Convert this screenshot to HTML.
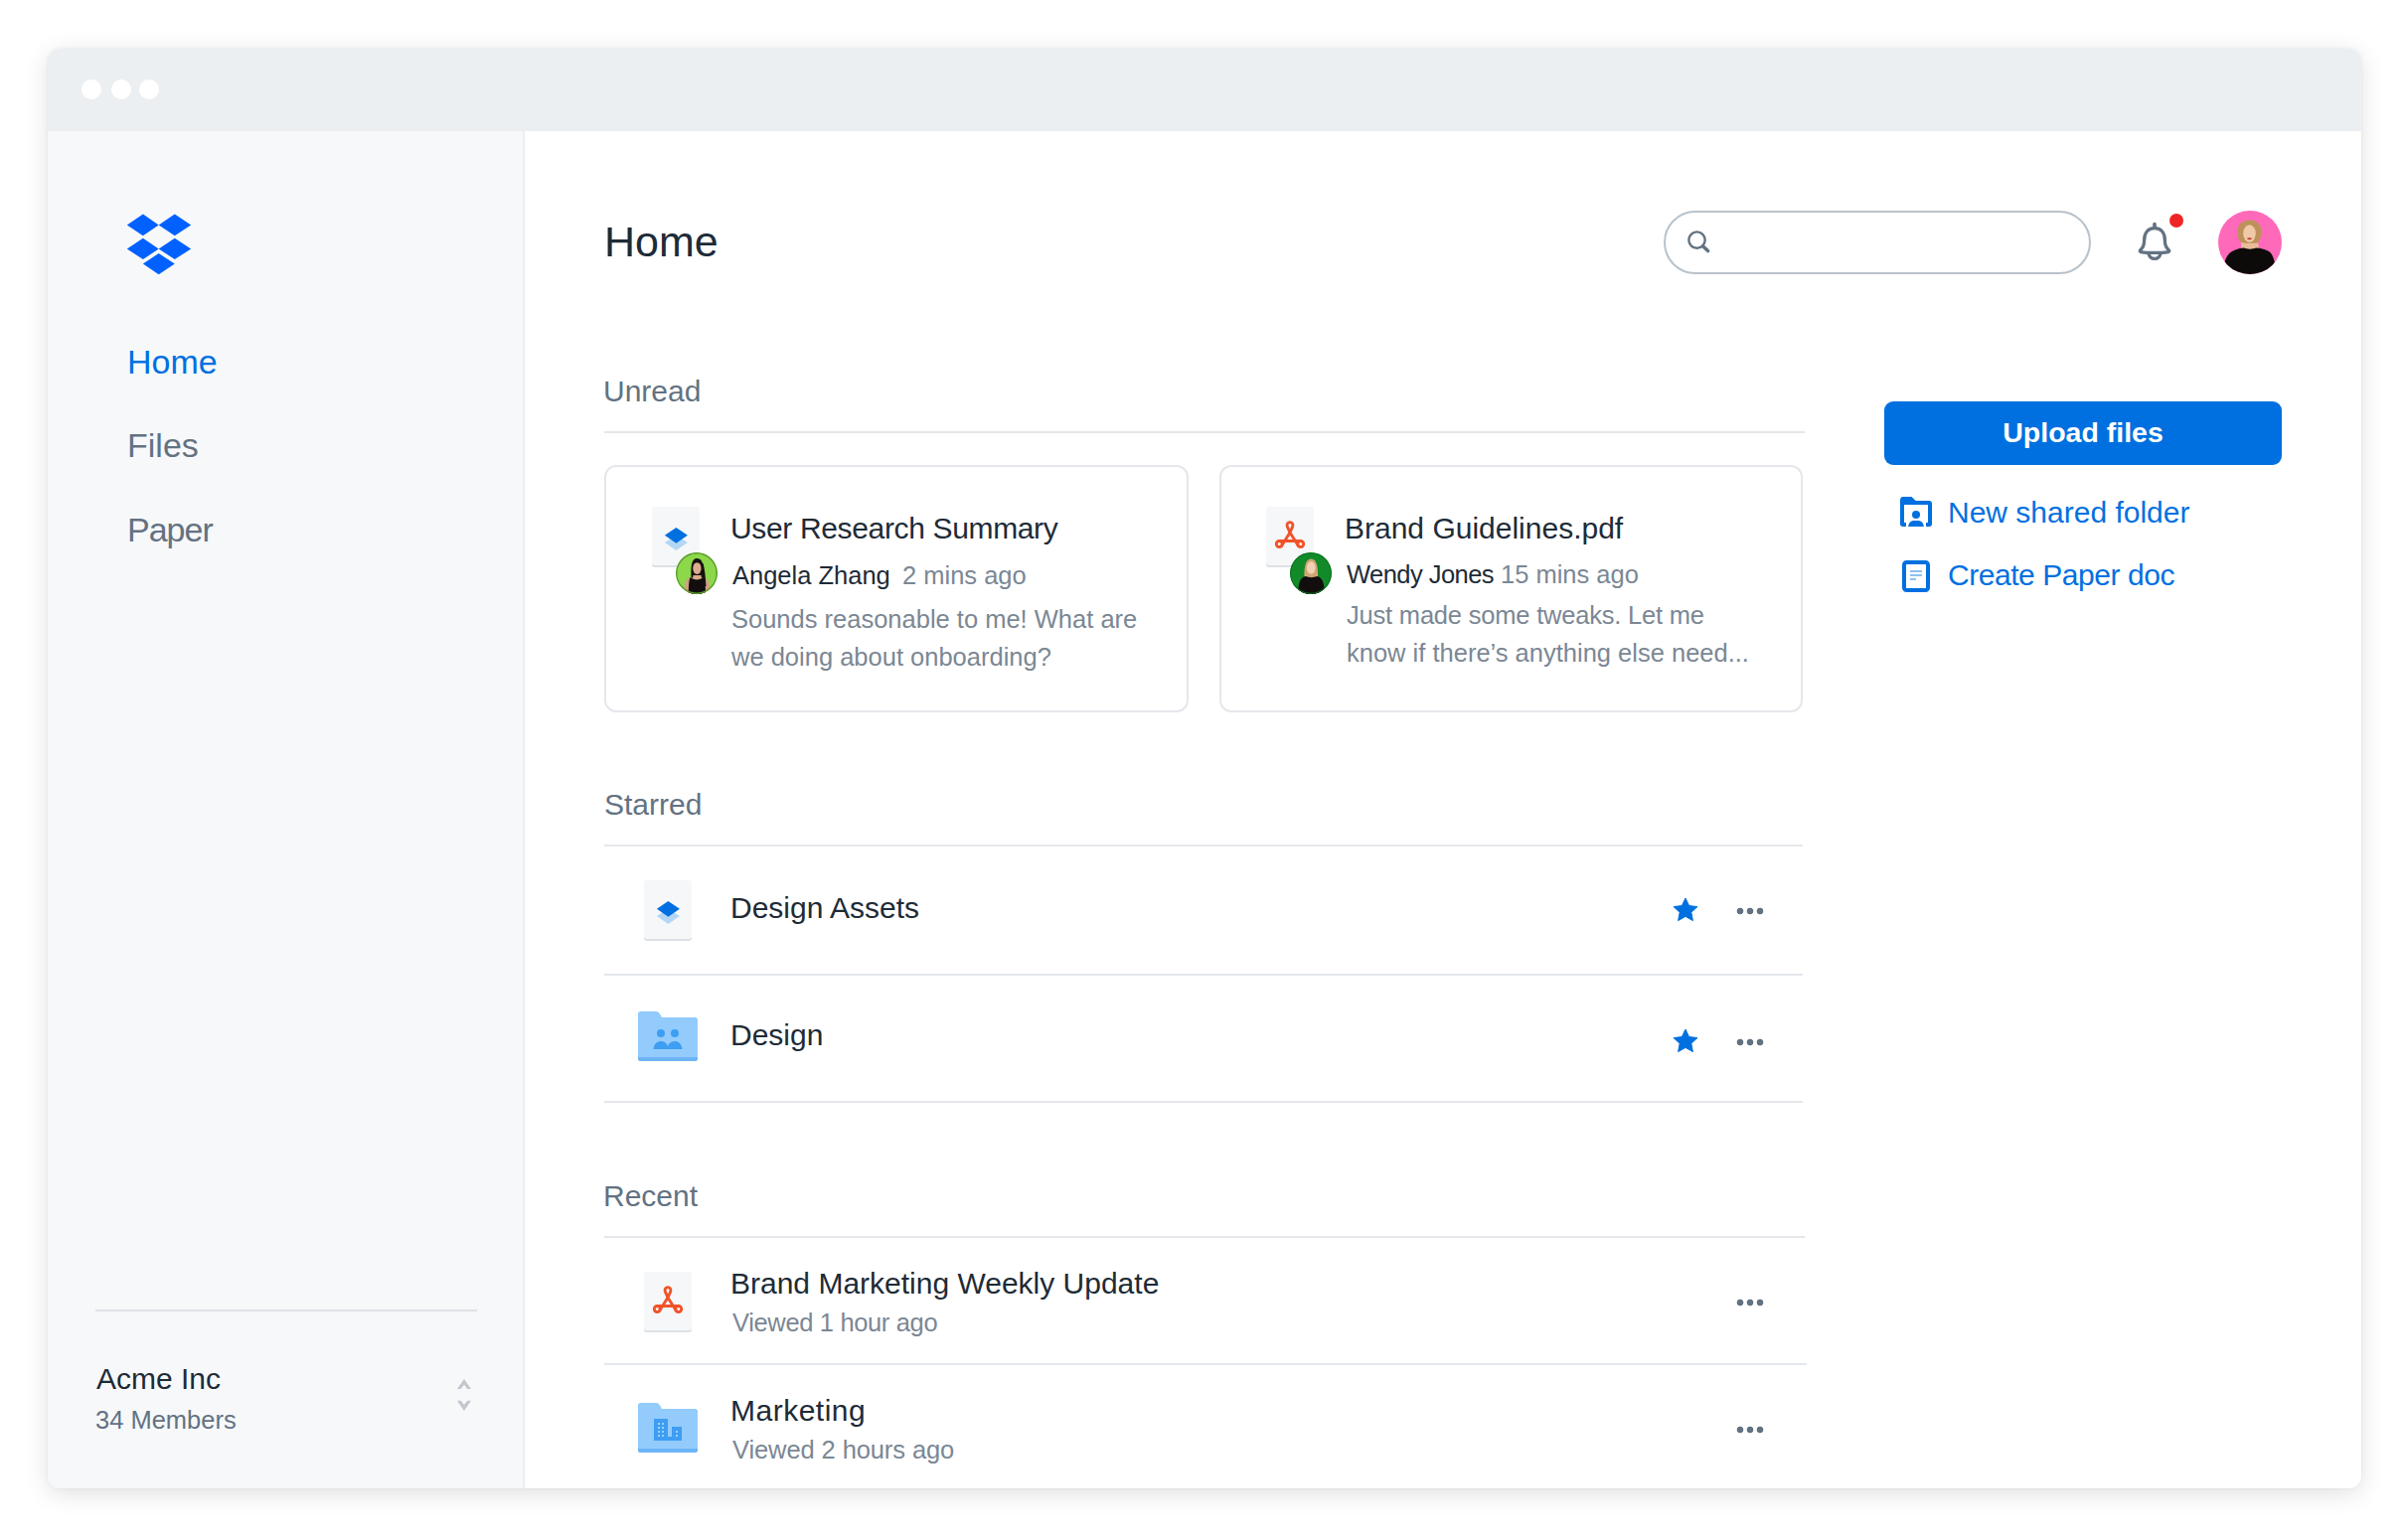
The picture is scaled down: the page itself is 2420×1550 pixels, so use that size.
<!DOCTYPE html>
<html>
<head>
<meta charset="utf-8">
<style>
html,body{margin:0;padding:0;background:#ffffff;width:2420px;height:1550px;overflow:hidden;}
body{font-family:"Liberation Sans",sans-serif;position:relative;}
.win{position:absolute;left:48px;top:49px;width:2328px;height:1449px;border-radius:12px;background:#fff;
  box-shadow:0 5px 24px rgba(0,0,0,0.13),0 0 3px rgba(0,0,0,0.06);overflow:hidden;}
.titlebar{position:absolute;left:0;top:0;width:2328px;height:83px;background:#ECEFF2;}
.dot{position:absolute;top:31px;width:20px;height:20px;border-radius:50%;background:#fff;}
.side{position:absolute;left:0;top:83px;width:478px;height:1366px;background:#F7F8FA;border-right:2px solid #EAEDF0;}
.t{position:absolute;white-space:nowrap;line-height:1;}
.dark{color:#1E2B37;}
.gray{color:#637282;}
.meta{color:#7B8794;}
.blue{color:#0070E0;}
.fbox{position:absolute;width:48px;height:61px;border-radius:3px;background:#F5F7F9;box-shadow:inset 0 -2px 0 #DDE1E5;}
.more{position:absolute;left:1745px;width:32px;height:10px;margin-top:-2px;background:radial-gradient(circle at 6px 5px,#637282 2.9px,transparent 3.7px),radial-gradient(circle at 16px 5px,#637282 2.9px,transparent 3.7px),radial-gradient(circle at 26px 5px,#637282 2.9px,transparent 3.7px);}
.hr{position:absolute;height:2px;background:#E4E7EB;}
</style>
</head>
<body>
<div class="win">
  <div class="titlebar">
    <div class="dot" style="left:34px"></div>
    <div class="dot" style="left:64px"></div>
    <div class="dot" style="left:92px"></div>
  </div>
  <div class="side">
  </div>
</div>
<!-- page-level absolute content (coordinates relative to page) -->

<div id="content" style="position:absolute;left:0;top:0;width:2420px;height:1550px;">
  <!-- logo -->
  <svg style="position:absolute;left:0;top:0" width="2420" height="300" viewBox="0 0 2420 300">
    <g fill="#0061FE">
      <polygon points="127.8,226.5 143.9,215.6 159.7,226.5 143.9,237.2"/>
      <polygon points="159.7,226.5 175.8,215.6 192.2,226.5 175.8,237.2"/>
      <polygon points="127.8,250.5 143.9,239.8 159.7,250.5 143.9,261.1"/>
      <polygon points="159.7,250.5 175.8,239.8 192.2,250.5 175.8,261.1"/>
      <polygon points="143.9,265.5 159.7,254.9 175.8,265.5 159.7,276.2"/>
    </g>
  </svg>
  <!-- sidebar nav -->
  <div class="t blue" style="left:128px;top:347px;font-size:34px">Home</div>
  <div class="t gray" style="left:128px;top:431px;font-size:34px">Files</div>
  <div class="t gray" style="left:128px;top:516px;font-size:34px;letter-spacing:-1px">Paper</div>
  <div class="hr" style="left:96px;top:1318px;width:384px;background:#DFE3E7"></div>
  <div class="t dark" style="left:97px;top:1373px;font-size:30px">Acme Inc</div>
  <div class="t gray" style="left:96px;top:1417px;font-size:25.5px">34 Members</div>
  <svg style="position:absolute;left:455px;top:1383px" width="24" height="42" viewBox="0 0 24 42">
    <polygon points="5,14.9 12,5.1 19,14.9 15.3,14.9 12,10.5 8.7,14.9" fill="#C1C7CD"/>
    <polygon points="5,26.7 8.7,26.7 12,31 15.3,26.7 19,26.7 12,36.9" fill="#C1C7CD"/>
  </svg>

  <!-- header -->
  <div class="t dark" style="left:608px;top:222px;font-size:43px">Home</div>
  <div style="position:absolute;left:1674px;top:212px;width:426px;height:60px;border:2px solid #B9C2CA;border-radius:32px;"></div>
  <svg style="position:absolute;left:1690px;top:224px" width="40" height="40" viewBox="0 0 40 40">
    <circle cx="17.5" cy="17.6" r="8.2" fill="none" stroke="#637282" stroke-width="2.4"/>
    <line x1="23.5" y1="23.8" x2="28.6" y2="28.6" stroke="#637282" stroke-width="3.4" stroke-linecap="round"/>
  </svg>
  <svg style="position:absolute;left:2140px;top:205px" width="70" height="70" viewBox="0 0 70 70">
    <path d="M28 20.6 V24" stroke="#637282" stroke-width="3.6" stroke-linecap="round"/>
    <path d="M28 24.7 C21 24.7 17.6 30 17.6 37 C17.6 41.5 16.8 43.8 14.2 46.2 C12.6 47.7 13.2 48.6 15.5 48.9 C20 49.6 36 49.6 40.5 48.9 C42.8 48.6 43.4 47.7 41.8 46.2 C39.2 43.8 38.4 41.5 38.4 37 C38.4 30 35 24.7 28 24.7 Z" fill="none" stroke="#637282" stroke-width="3.3" stroke-linejoin="round"/>
    <path d="M21.8 49.6 C22.6 53.6 24.9 55.4 28 55.4 C31.1 55.4 33.4 53.6 34.2 49.6" fill="none" stroke="#637282" stroke-width="3.2"/>
    <circle cx="50" cy="17" r="7" fill="#F02424"/>
  </svg>
  <!-- avatar main -->
  <svg style="position:absolute;left:2232px;top:212px" width="64" height="64" viewBox="0 0 64 64">
    <defs><clipPath id="cpA"><circle cx="32" cy="32" r="32"/></clipPath></defs>
    <g clip-path="url(#cpA)">
      <rect width="64" height="64" fill="#FF69B9"/>
      <path d="M23 31 L40 31 L41 40 L23 40 Z" fill="#E8BC98"/>
      <path d="M4 64 C6 50 9 43 15 40.5 C19 38.5 23 37.5 26 37.5 C29 39 35 39 38 37.5 C42 37.5 47 39 51 41 C55 43.5 57 50 59 64 Z" fill="#0D0A0A"/>
      <path d="M31 9.5 C37 9 43.5 13 43.5 20 C44 25 42 30 39.5 32.5 C37 33 27 33 23 32 C20 29 19 25 19.5 20 C20 13 25 10 31 9.5 Z" fill="#BE915A"/>
      <ellipse cx="31.5" cy="23" rx="6.3" ry="8.8" fill="#EFC9A8"/>
      <ellipse cx="31.5" cy="28.3" rx="2.3" ry="1" fill="#C8353A"/>
    </g>
  </svg>

  <!-- Unread -->
  <div class="t gray" style="left:607px;top:379px;font-size:30px">Unread</div>
  <div class="hr" style="left:608px;top:434px;width:1208px"></div>

  <div style="position:absolute;left:608px;top:468px;width:584px;height:245px;border:2px solid #E4E7EB;border-radius:12px;"></div>
  <div style="position:absolute;left:1227px;top:468px;width:583px;height:245px;border:2px solid #E4E7EB;border-radius:12px;"></div>

  <!-- card 1 -->
  <div class="fbox" style="left:656px;top:510px;"></div>
  <svg style="position:absolute;left:656px;top:510px" width="48" height="61" viewBox="0 0 48 61">
    <polygon points="12.9,36.1 24.4,28.8 35.9,36.1 24.4,43.9" fill="#B4D6F5"/>
    <polygon points="12.9,28.8 24.4,21 35.9,28.8 24.4,36.8" fill="#0070E0"/>
  </svg>
  <svg style="position:absolute;left:680px;top:556px" width="42" height="42" viewBox="0 0 42 42">
    <defs><clipPath id="cpB"><circle cx="21" cy="21" r="21"/></clipPath></defs>
    <g clip-path="url(#cpB)">
      <rect width="42" height="42" fill="#8CD74A"/>
      <path d="M15.5 26 C15 14 15.5 6 21.5 6 C27.5 6 28.5 14 28.3 30 L16 30 Z" fill="#17110F"/>
      <path d="M8.5 42 C8.5 33 9.5 27 13.5 25.5 L29.5 25.5 C33.5 27 34.5 33 34.5 42 Z" fill="#D2A184"/>
      <path d="M17.5 23 L25.5 23 L26 27 L17 27 Z" fill="#D9AA8A"/>
      <path d="M12.8 42 C12.8 34 13.2 28 14.5 25 C16.5 26.5 19 27.5 21 27.5 C23.5 27.5 26 26.5 28 25 C29.5 28 30 34 30 42 Z" fill="#120E0E"/>
      <ellipse cx="21.4" cy="16" rx="4.2" ry="6" fill="#DBAD8E"/>
      <path d="M17 11 C18 8 20 7.5 21.5 7.5 C24 7.5 25.5 9 26 12 C24 10 19.5 10 17 11 Z" fill="#17110F"/>
      <path d="M25.2 12 C27 18 28 26 28.5 34 L30.5 34 C30 25 29 16 27.5 11 Z" fill="#17110F"/>
      <circle cx="21" cy="21" r="20.3" fill="none" stroke="#5C9B30" stroke-width="1.5"/>
    </g>
  </svg>
  <div class="t dark" style="left:735px;top:517px;font-size:30px;letter-spacing:-0.35px">User Research Summary</div>
  <div class="t dark" style="left:737px;top:567px;font-size:25.5px">Angela Zhang</div>
  <div class="t meta" style="left:908px;top:567px;font-size:25.5px">2 mins ago</div>
  <div class="t meta" style="left:736px;top:611px;font-size:25.5px">Sounds reasonable to me! What are</div>
  <div class="t meta" style="left:736px;top:649px;font-size:25.5px">we doing about onboarding?</div>

  <!-- card 2 -->
  <div class="fbox" style="left:1274px;top:510px;"></div>
  <svg style="position:absolute;left:1274px;top:510px" width="48" height="61" viewBox="0 0 48 61">
    <g fill="none" stroke="#F0532A" stroke-width="2.9" stroke-linejoin="round" stroke-linecap="round">
      <path d="M24 26 L21.26 19.82 A3 3 0 1 1 26.74 19.82 Z"/>
      <path d="M24 26 L15.8 39.1 M24 26 L32.2 39.1 M13.3 34.5 L34.7 34.5"/>
      <circle cx="13.3" cy="37.5" r="3"/>
      <circle cx="34.7" cy="37.5" r="3"/>
    </g>
  </svg>
  <svg style="position:absolute;left:1298px;top:556px" width="42" height="42" viewBox="0 0 42 42">
    <defs><clipPath id="cpC"><circle cx="21" cy="21" r="21"/></clipPath></defs>
    <g clip-path="url(#cpC)">
      <rect width="42" height="42" fill="#128A29"/>
      <path d="M14.5 29 C14 16 15 6.5 21.3 6.5 C27.5 6.5 28.5 16 28 29 Z" fill="#CFA674"/>
      <path d="M8 42 C8.5 31 10 25 16 24 C19 25.5 24 25.5 27 24 C33 25 34.5 31 35 42 Z" fill="#120E0E"/>
      <ellipse cx="21.2" cy="15.5" rx="4.4" ry="6.2" fill="#F2D0B4"/>
      <circle cx="21" cy="21" r="20.4" fill="none" stroke="#0E7522" stroke-width="1.2"/>
    </g>
  </svg>
  <div class="t dark" style="left:1353px;top:517px;font-size:30px">Brand Guidelines.pdf</div>
  <div class="t dark" style="left:1355px;top:566px;font-size:25.5px;letter-spacing:-0.55px">Wendy Jones</div>
  <div class="t meta" style="left:1510px;top:566px;font-size:25.5px">15 mins ago</div>
  <div class="t meta" style="left:1355px;top:607px;font-size:25.5px;letter-spacing:-0.2px">Just made some tweaks. Let me</div>
  <div class="t meta" style="left:1355px;top:645px;font-size:25.5px">know if there’s anything else need...</div>

  <!-- right column -->
  <div style="position:absolute;left:1896px;top:404px;width:400px;height:64px;background:#0070E0;border-radius:9px;"></div>
  <div class="t" style="left:1896px;top:421px;width:400px;text-align:center;font-size:28.5px;font-weight:bold;color:#fff">Upload files</div>
  <svg style="position:absolute;left:1908px;top:496px" width="40" height="40" viewBox="0 0 40 40">
    <path d="M4 8 C4 5 5 4 7 4 L15.5 4 L19.7 8 L33 8 C35 8 36 9 36 11 L36 31.5 C36 33 35 34 33.5 34 L30 34 L30 30 L32 30 L32 12 L8 12 L8 30 L10 30 L10 34 L6.5 34 C5 34 4 33 4 31.5 Z" fill="#0070E0"/>
    <circle cx="20" cy="22" r="4" fill="#0070E0"/>
    <path d="M12.2 34 C12.5 30 15 28 18 28 L22 28 C25 28 27.5 30 27.8 34 Z" fill="#0070E0"/>
  </svg>
  <svg style="position:absolute;left:1908px;top:560px" width="40" height="40" viewBox="0 0 40 40">
    <rect x="8" y="6" width="24" height="28" rx="2.5" fill="none" stroke="#0070E0" stroke-width="4"/>
    <rect x="14" y="14" width="12" height="2" fill="#8EC0F0"/>
    <rect x="14" y="18" width="12" height="2" fill="#8EC0F0"/>
    <rect x="14" y="22" width="6" height="2" fill="#8EC0F0"/>
  </svg>
  <div class="t blue" style="left:1960px;top:501px;font-size:30px">New shared folder</div>
  <div class="t blue" style="left:1960px;top:564px;font-size:30px;letter-spacing:-0.45px">Create Paper doc</div>

  <!-- Starred -->
  <div class="t gray" style="left:608px;top:795px;font-size:30px">Starred</div>
  <div class="hr" style="left:608px;top:850px;width:1206px"></div>
  <div class="fbox" style="left:648px;top:886px;"></div>
  <svg style="position:absolute;left:648px;top:886px" width="48" height="61" viewBox="0 0 48 61">
    <polygon points="12.9,36.1 24.4,28.8 35.9,36.1 24.4,43.9" fill="#B4D6F5"/>
    <polygon points="12.9,28.8 24.4,21 35.9,28.8 24.4,36.8" fill="#0070E0"/>
  </svg>
  <div class="t dark" style="left:735px;top:899px;font-size:30px">Design Assets</div>
  <div class="hr" style="left:608px;top:980px;width:1206px"></div>
  <svg style="position:absolute;left:642px;top:1018px" width="60" height="50" viewBox="0 0 60 50">
    <path d="M0 2.5 C0 1 1 0 2.5 0 L18.5 0 C20 0 21 1 22 2.5 L24 6 L57.5 6 C59 6 60 7 60 8.5 L60 47.5 C60 49 59 50 57.5 50 L2.5 50 C1 50 0 49 0 47.5 Z" fill="#93CBFD"/>
    <path d="M0 46 L60 46 L60 47.5 C60 49 59 50 57.5 50 L2.5 50 C1 50 0 49 0 47.5 Z" fill="#6DB5F7"/>
    <circle cx="23" cy="22" r="4" fill="#3D9EF2"/>
    <circle cx="37" cy="22" r="4" fill="#3D9EF2"/>
    <path d="M15.5 38 C16 33 19 30 23 30 C27 30 30 33 30 36 C30 33 33 30 37 30 C41 30 44 33 44.5 38 Z" fill="#3D9EF2"/>
  </svg>
  <div class="t dark" style="left:735px;top:1027px;font-size:30px">Design</div>
  <div class="hr" style="left:608px;top:1108px;width:1206px"></div>
  <svg style="position:absolute;left:1680px;top:900px" width="32" height="32" viewBox="0 0 32 32">
    <polygon points="16,4 19.6,11.6 28,12.6 21.8,18.3 23.4,26.6 16,22.4 8.6,26.6 10.2,18.3 4,12.6 12.4,11.6" fill="#0070E0" stroke="#0070E0" stroke-width="1" stroke-linejoin="round"/>
  </svg>
  <svg style="position:absolute;left:1680px;top:1032px" width="32" height="32" viewBox="0 0 32 32">
    <polygon points="16,4 19.6,11.6 28,12.6 21.8,18.3 23.4,26.6 16,22.4 8.6,26.6 10.2,18.3 4,12.6 12.4,11.6" fill="#0070E0" stroke="#0070E0" stroke-width="1" stroke-linejoin="round"/>
  </svg>
  <div class="more" style="top:914px"></div>
  <div class="more" style="top:1046px"></div>

  <!-- Recent -->
  <div class="t gray" style="left:607px;top:1189px;font-size:30px">Recent</div>
  <div class="hr" style="left:608px;top:1244px;width:1208px"></div>
  <div class="fbox" style="left:648px;top:1280px;"></div>
  <svg style="position:absolute;left:648px;top:1280px" width="48" height="61" viewBox="0 0 48 61">
    <g fill="none" stroke="#F0532A" stroke-width="2.9" stroke-linejoin="round" stroke-linecap="round">
      <path d="M24 26 L21.26 19.82 A3 3 0 1 1 26.74 19.82 Z"/>
      <path d="M24 26 L15.8 39.1 M24 26 L32.2 39.1 M13.3 34.5 L34.7 34.5"/>
      <circle cx="13.3" cy="37.5" r="3"/>
      <circle cx="34.7" cy="37.5" r="3"/>
    </g>
  </svg>
  <div class="t dark" style="left:735px;top:1277px;font-size:30px">Brand Marketing Weekly Update</div>
  <div class="t meta" style="left:737px;top:1319px;font-size:25.5px;letter-spacing:-0.35px">Viewed 1 hour ago</div>
  <div class="hr" style="left:608px;top:1372px;width:1210px"></div>
  <svg style="position:absolute;left:642px;top:1412px" width="60" height="50" viewBox="0 0 60 50">
    <path d="M0 2.5 C0 1 1 0 2.5 0 L18.5 0 C20 0 21 1 22 2.5 L24 6 L57.5 6 C59 6 60 7 60 8.5 L60 47.5 C60 49 59 50 57.5 50 L2.5 50 C1 50 0 49 0 47.5 Z" fill="#93CBFD"/>
    <path d="M0 46 L60 46 L60 47.5 C60 49 59 50 57.5 50 L2.5 50 C1 50 0 49 0 47.5 Z" fill="#6DB5F7"/>
    <path d="M16 16 L30 16 L30 34 L34 34 L34 24 L44 24 L44 38 L16 38 Z" fill="#3D9EF2"/>
    <g fill="#9DD0FB">
      <rect x="20" y="20" width="2" height="2"/><rect x="24" y="20" width="2" height="2"/>
      <rect x="20" y="24" width="2" height="2"/><rect x="24" y="24" width="2" height="2"/>
      <rect x="20" y="28" width="2" height="2"/><rect x="24" y="28" width="2" height="2"/>
      <rect x="20" y="32" width="2" height="2"/><rect x="24" y="32" width="2" height="2"/>
      <rect x="38" y="28" width="2" height="2"/><rect x="38" y="32" width="2" height="2"/>
    </g>
  </svg>
  <div class="t dark" style="left:735px;top:1405px;font-size:30px;letter-spacing:0.5px">Marketing</div>
  <div class="t meta" style="left:737px;top:1447px;font-size:25.5px;letter-spacing:-0.1px">Viewed 2 hours ago</div>
  <div class="more" style="top:1308px"></div>
  <div class="more" style="top:1436px"></div>
</div>

</body>
</html>
